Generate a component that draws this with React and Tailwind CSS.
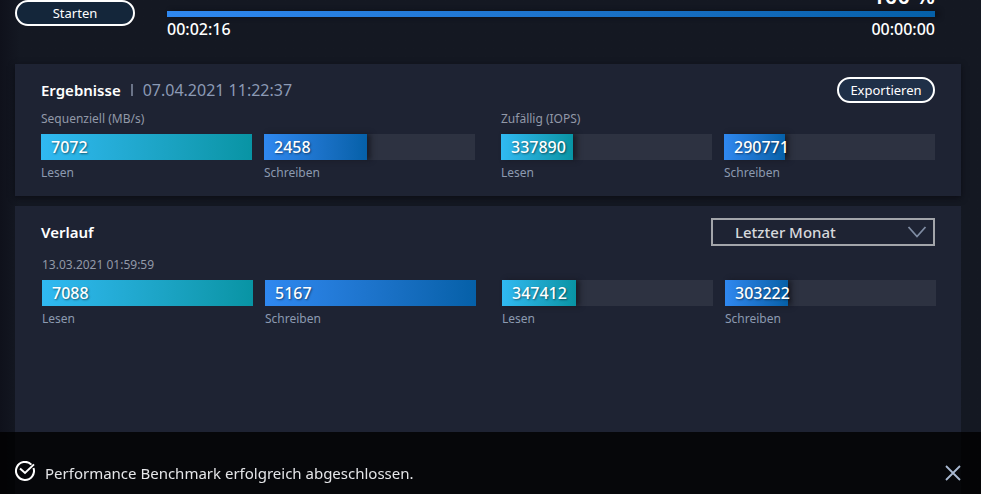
const results = {
  sequential: [
    { id: 'r-seq-read', label: 'Lesen', value: 7072, percent: 100, kind: 'read' },
    { id: 'r-seq-write', label: 'Schreiben', value: 2458, percent: 49, kind: 'write' },
  ],
  random: [
    { id: 'r-rnd-read', label: 'Lesen', value: 337890, percent: 34, kind: 'read' },
    { id: 'r-rnd-write', label: 'Schreiben', value: 290771, percent: 29, kind: 'write' },
  ],
};

const history = {
  sequential: [
    { id: 'h-seq-read', label: 'Lesen', value: 7088, percent: 100, kind: 'read' },
    { id: 'h-seq-write', label: 'Schreiben', value: 5167, percent: 100, kind: 'write' },
  ],
  random: [
    { id: 'h-rnd-read', label: 'Lesen', value: 347412, percent: 35, kind: 'read' },
    { id: 'h-rnd-write', label: 'Schreiben', value: 303222, percent: 30, kind: 'write' },
  ],
};

const fills = {
  read: 'bg-linear-to-r from-[#30b9f2] to-[#0894a4]',
  write: 'bg-linear-to-r from-[#2f88f0] to-[#0560a8]',
};

function Bar({ id, label, value, percent, kind }) {
  const shadow = percent < 100 ? 'shadow-[4px_0_5px_rgba(20,22,30,0.7)]' : '';

  return (
    <div>
      <div className="h-[26px] bg-[#2d3241]">
        <div
          className={`flex h-full items-center pl-2.5 ${fills[kind]} ${shadow}`}
          style={{ width: `${percent}%` }}
        >
          <span id={id} className="text-base font-medium whitespace-nowrap text-white [text-shadow:1px_1px_2px_rgba(0,0,0,0.5)]">
            {value}
          </span>
        </div>
      </div>
      <p className="mt-[5px] text-xs text-[#8c9ab0]">{label}</p>
    </div>
  );
}

function BarGroup({ title, bars }) {
  return (
    <div className="flex-1">
      <p className="mb-[7px] h-4 text-xs text-[#9299a8]">{title}</p>
      <div className="grid grid-cols-2 gap-3">
        {bars.map((bar) => (
          <Bar key={bar.id} {...bar} />
        ))}
      </div>
    </div>
  );
}

function Header() {
  return (
    <header className="flex items-start gap-8 pr-[26px]">
      <button type="button" className="h-[26px] w-[120px] shrink-0 rounded-full border-2 border-white bg-[#14263a] text-[13px] leading-5 text-white">
        Starten
      </button>
      <div className="-mt-[17px] flex-1">
        <p className="mb-1 text-right text-[22px] leading-6 font-semibold text-white">100 %</p>
        <div className="h-1.5 bg-linear-to-r from-[#2f88f0] to-[#0560a8] shadow-[4px_0_5px_rgba(10,11,18,0.7)]" />
        <div className="flex justify-between text-base font-medium text-white">
          <span>00:02:16</span>
          <span>00:00:00</span>
        </div>
      </div>
    </header>
  );
}

function Toast() {
  return (
    <div role="status" className="fixed inset-x-0 bottom-0 flex h-[62px] items-center bg-black/80 pt-5 pr-5 pl-[15px]">
      <svg className="mb-1 size-5 shrink-0" viewBox="0 0 20 20" fill="none" stroke="#fff" strokeWidth="2">
        <path d="M16.4 3.6A9 9 0 1 0 18.5 7" />
        <path d="M5 7.4l5 4.6L19 3.4" />
      </svg>
      <p className="ml-2.5 text-[15px] text-[#e4e5e8]">Performance Benchmark erfolgreich abgeschlossen.</p>
      <button type="button" aria-label="Schließen" className="ml-auto">
        <svg className="size-4" viewBox="0 0 16 16" fill="none" stroke="#a9b9d2" strokeWidth="1.8">
          <path d="M1 1l14 14M15 1L1 15" />
        </svg>
      </button>
    </div>
  );
}

export default function App() {
  return (
    <div className="flex h-screen flex-col overflow-hidden bg-[#141822] bg-linear-to-r from-[#0f111b] to-[#141822] to-[20px] pr-5 pl-[15px] font-['Noto_Sans',sans-serif]">
      <Header />

      <section className="mt-[23px] bg-[#1e2333] px-[26px] pt-[13px] pb-[15px] shadow-[0_2px_6px_rgba(8,9,16,0.7)]">
        <div className="flex items-center">
          <h2 className="text-[15px] font-semibold text-white">Ergebnisse</h2>
          <span className="mx-2.5 h-3 w-0.5 bg-[#6b7488]" />
          <time className="text-base text-[#8c9ab5]">07.04.2021 11:22:37</time>
          <button type="button" className="ml-auto h-[26px] w-[98px] rounded-full border-2 border-white bg-[#1f3048] text-[13px] leading-5 text-white">
            Exportieren
          </button>
        </div>
        <div className="mt-2 flex gap-[26px]">
          <BarGroup title="Sequenziell (MB/s)" bars={results.sequential} />
          <BarGroup title="Zufällig (IOPS)" bars={results.random} />
        </div>
      </section>

      <section className="mt-2.5 flex-1 bg-[#1e2333] pt-3">
        <div className="flex items-center justify-between px-[26px]">
          <h2 className="text-[15px] font-semibold text-white">Verlauf</h2>
          <div className="relative">
            <select
              aria-label="Zeitraum"
              className="block h-7 w-56 appearance-none border-2 border-[#a3a5aa] bg-transparent pl-[22px] text-[15px] leading-6 font-medium text-[#d6d8dc]"
            >
              <option>Letzter Monat</option>
            </select>
            <svg className="pointer-events-none absolute top-2 right-2 h-3 w-5" viewBox="0 0 20 12" fill="none" stroke="#7f8ca3" strokeWidth="1.8">
              <path d="M1.5 1L10 10.5L18.5 1" />
            </svg>
          </div>
        </div>
        <div className="mt-[11px] flex gap-[26px] pr-[25px] pl-[27px]">
          <BarGroup title="13.03.2021 01:59:59" bars={history.sequential} />
          <BarGroup bars={history.random} />
        </div>
      </section>

      <Toast />
    </div>
  );
}
